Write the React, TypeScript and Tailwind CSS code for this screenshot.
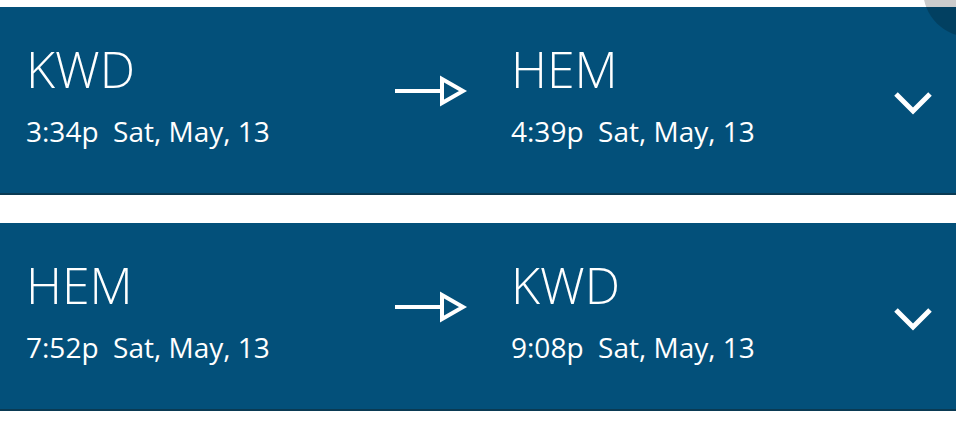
import React from 'react';

type Leg = {
  from: string;
  fromTime: string;
  to: string;
  toTime: string;
  date: string;
};

const legs: Leg[] = [
  { from: 'KWD', fromTime: '3:34p', to: 'HEM', toTime: '4:39p', date: 'Sat, May, 13' },
  { from: 'HEM', fromTime: '7:52p', to: 'KWD', toTime: '9:08p', date: 'Sat, May, 13' },
];

function Arrow() {
  return (
    <svg width="74" height="32" viewBox="0 0 74 32" className="shrink-0">
      <line x1="0" y1="16" x2="46" y2="16" stroke="white" strokeWidth="4" />
      <polygon points="47,4 68,16 47,28" fill="none" stroke="white" strokeWidth="4" />
    </svg>
  );
}

function Chevron() {
  return (
    <svg width="42" height="26" viewBox="0 0 42 26">
      <polyline points="3,4 20,21 37,4" fill="none" stroke="white" strokeWidth="5" />
    </svg>
  );
}

function Stop({ code, time, date }: { code: string; time: string; date: string }) {
  return (
    <div className="flex flex-col">
      <div className="text-[50px] leading-none font-light">{code}</div>
      <div className="mt-[23px] text-[28px] leading-none whitespace-pre">
        {time}  {date}
      </div>
    </div>
  );
}

export default function App() {
  return (
    <div
      className="relative w-[956px] h-[428px] overflow-hidden bg-white pt-[7px]"
      style={{ fontFamily: '"Open Sans", sans-serif' }}
    >
      <div className="flex flex-col gap-[28px]">
        {legs.map((leg, i) => (
          <div
            key={i}
            className="h-[188px] bg-[#03507a] border-b-2 border-[#0a3a53] text-white flex items-start pl-[26px] pt-[37px]"
          >
            <div className="w-[369px]">
              <Stop code={leg.from} time={leg.fromTime} date={leg.date} />
            </div>
            <div className="w-[116px] pt-[31px]">
              <Arrow />
            </div>
            <div className="flex-1">
              <Stop code={leg.to} time={leg.toTime} date={leg.date} />
            </div>
            <div className="pt-[46px] pr-[21px]">
              <Chevron />
            </div>
          </div>
        ))}
      </div>
      <div className="absolute left-[923px] top-[-57px] w-[94px] h-[94px] rounded-full bg-black/20" />
    </div>
  );
}
